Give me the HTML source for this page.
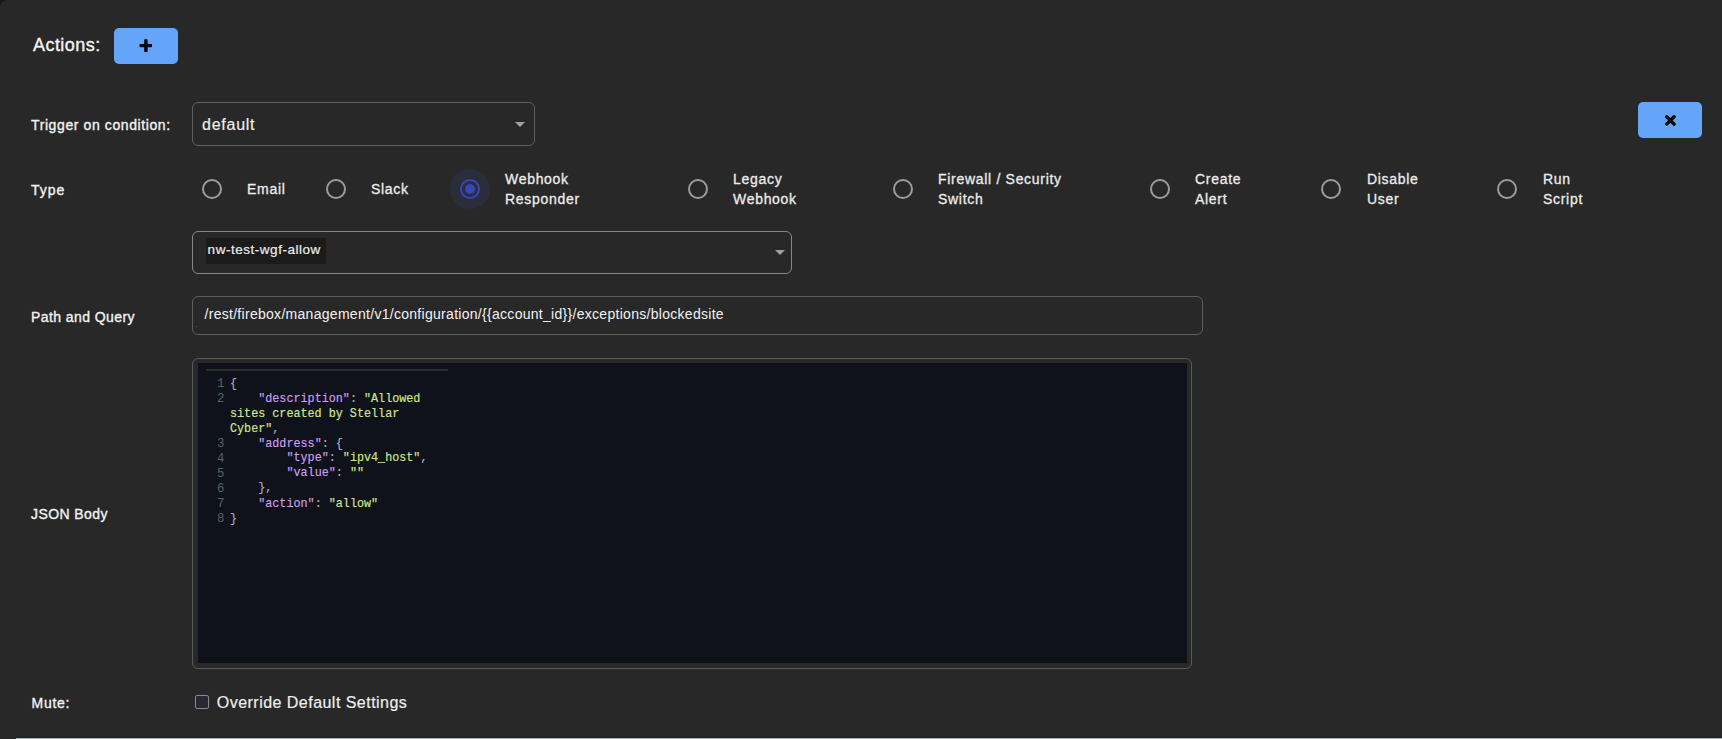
<!DOCTYPE html>
<html><head><meta charset="utf-8">
<style>
*{box-sizing:border-box;margin:0;padding:0}
html,body{width:1722px;height:739px;overflow:hidden;background:#282828;font-family:"Liberation Sans",sans-serif;color:#f0f0f0}
.a{position:absolute;white-space:pre;line-height:1}
.lbl{font-size:14px;color:#f2f2f2;letter-spacing:0.5px;-webkit-text-stroke:0.35px #f2f2f2}
.corner{position:absolute;left:0;top:0;width:12px;height:12px;background:#181818}
.corner::after{content:"";position:absolute;left:0;top:0;width:24px;height:24px;border-top-left-radius:7px;background:#282828}
.btn{position:absolute;background:#64a5fa;border-radius:5px}
.sel{position:absolute;border:1px solid #5f5f5f;border-radius:6px}
.caret{position:absolute;width:0;height:0;border-left:5px solid transparent;border-right:5px solid transparent;border-top:5px solid #a0a0a0}
.radio{position:absolute;width:20px;height:20px;border:2px solid #9c9c9c;border-radius:50%}
.rl{font-size:14px;color:#ececec;line-height:20px;letter-spacing:0.7px;-webkit-text-stroke:0.3px #ececec}
.code{position:absolute;font-family:"Liberation Mono",monospace;font-size:11.75px;line-height:13.889px;white-space:pre;color:#a9b1bd;transform:scaleY(1.08);transform-origin:0 0;-webkit-text-stroke:0.15px}
.k{color:#d09ef0;-webkit-text-stroke-color:#d09ef0}.s{color:#cfe98a;-webkit-text-stroke-color:#cfe98a}.p{color:#a9b1bd;-webkit-text-stroke-color:#a9b1bd}
.ln{position:absolute;font-family:"Liberation Mono",monospace;font-size:11.67px;line-height:15px;color:#59606c;text-align:right;width:14px}
</style></head><body>
<div class="corner"></div>

<!-- Actions -->
<div class="a" style="left:33px;top:36px;font-size:18px;color:#f5f5f5;letter-spacing:0.45px;-webkit-text-stroke:0.35px #f5f5f5">Actions:</div>
<div class="btn" style="left:114px;top:28px;width:64px;height:36px">
  <svg width="64" height="36" style="position:absolute;left:0;top:0"><rect x="25.5" y="16.1" width="12.5" height="3.1" rx="0.6" fill="#050505"/><rect x="30.2" y="11.2" width="3.4" height="12.7" rx="0.6" fill="#050505"/></svg>
</div>

<!-- Trigger -->
<div class="a lbl" style="left:31px;top:118.2px;letter-spacing:0.6px">Trigger on condition:</div>
<div class="sel" style="left:192px;top:102px;width:343px;height:44px"></div>
<div class="a" style="left:202px;top:117px;font-size:16px;color:#ededed;letter-spacing:0.75px;-webkit-text-stroke:0.2px #ededed">default</div>
<div class="caret" style="left:515px;top:122px"></div>

<!-- close button -->
<div class="btn" style="left:1638px;top:102px;width:64px;height:36px">
  <svg width="64" height="36" style="position:absolute;left:0;top:0"><path d="M28.7 14.7 L36.1 22.1 M36.1 14.7 L28.7 22.1" stroke="#050505" stroke-width="3.4" stroke-linecap="round"/></svg>
</div>

<!-- Type -->
<div class="a lbl" style="left:31px;top:183px;letter-spacing:1px">Type</div>
<div class="radio" style="left:202px;top:179px"></div>
<div class="a rl" style="left:247px;top:179px">Email</div>
<div class="radio" style="left:326px;top:179px"></div>
<div class="a rl" style="left:371px;top:179px">Slack</div>
<div style="position:absolute;left:450px;top:169px;width:40px;height:40px;border-radius:50%;background:#2b2d3b"></div>
<div class="radio" style="left:460px;top:179px;border-color:#3647b8"></div>
<div style="position:absolute;left:465px;top:184px;width:10px;height:10px;border-radius:50%;background:#3647b8"></div>
<div class="a rl" style="left:505px;top:169px">Webhook<br>Responder</div>
<div class="radio" style="left:688px;top:179px"></div>
<div class="a rl" style="left:733px;top:169px">Legacy<br>Webhook</div>
<div class="radio" style="left:893px;top:179px"></div>
<div class="a rl" style="left:938px;top:169px">Firewall / Security<br>Switch</div>
<div class="radio" style="left:1150px;top:179px"></div>
<div class="a rl" style="left:1195px;top:169px">Create<br>Alert</div>
<div class="radio" style="left:1321px;top:179px"></div>
<div class="a rl" style="left:1367px;top:169px">Disable<br>User</div>
<div class="radio" style="left:1497px;top:179px"></div>
<div class="a rl" style="left:1543px;top:169px">Run<br>Script</div>

<!-- select 2 -->
<div class="sel" style="left:192px;top:231px;width:600px;height:43px;border-color:#878787"></div>
<div style="position:absolute;left:206px;top:238px;width:120px;height:26px;background:#1b1b1b"></div>
<div class="a" style="left:207.6px;top:242.5px;font-size:13.5px;color:#ececec;letter-spacing:0.53px;-webkit-text-stroke:0.2px #ececec">nw-test-wgf-allow</div>
<div class="caret" style="left:775px;top:250px"></div>

<!-- Path -->
<div class="a lbl" style="left:31px;top:309.5px;letter-spacing:0.42px">Path and Query</div>
<div class="sel" style="left:192px;top:296px;width:1011px;height:39px;border-color:#5c5c5c"></div>
<div class="a" style="left:204.5px;top:307px;font-size:14px;color:#f2f2f2;letter-spacing:0.29px">/rest/firebox/management/v1/configuration/{{account_id}}/exceptions/blockedsite</div>

<div style="position:absolute;left:196px;top:326px;width:1px;height:1px;background:#555"></div>
<!-- JSON body -->
<div class="a lbl" style="left:31px;top:506.5px;letter-spacing:0.42px">JSON Body</div>
<div style="position:absolute;left:192px;top:358px;width:1000px;height:311px;border:1px solid #5a5a5a;border-radius:6px"></div>
<div style="position:absolute;left:198px;top:363px;width:989px;height:300px;background:#0f121a"></div>
<div style="position:absolute;left:206px;top:369px;width:242px;height:2px;background:#2d2d2d"></div>
<div class="ln" style="left:208px;top:377px;font-size:12.3px;width:16.5px">1<br>2<br><br><br>3<br>4<br>5<br>6<br>7<br>8</div>
<div class="code" style="left:230px;top:377px"><span class="p">{</span>
    <span class="k">"description"</span><span class="p">: </span><span class="s">"Allowed</span>
<span class="s">sites created by Stellar</span>
<span class="s">Cyber"</span><span class="p">,</span>
    <span class="k">"address"</span><span class="p">: {</span>
        <span class="k">"type"</span><span class="p">: </span><span class="s">"ipv4_host"</span><span class="p">,</span>
        <span class="k">"value"</span><span class="p">: </span><span class="s">""</span>
    <span class="p">},</span>
    <span class="k">"action"</span><span class="p">: </span><span class="s">"allow"</span>
<span class="p">}</span></div>

<!-- Mute -->
<div class="a lbl" style="left:31.6px;top:696px;letter-spacing:0.7px">Mute:</div>
<div style="position:absolute;left:195px;top:695px;width:14px;height:14px;border:1px solid #8b8998;border-radius:2px;background:#2a2836"></div>
<div class="a" style="left:216.8px;top:695px;font-size:16px;color:#eeeeee;letter-spacing:0.47px;-webkit-text-stroke:0.2px #eeeeee">Override Default Settings</div>

<!-- bottom strip -->
<div style="position:absolute;left:16px;top:737px;width:1706px;height:1px;background:#202020"></div>
<div style="position:absolute;left:16px;top:738px;width:1706px;height:1px;background:#a5bac8"></div>
</body></html>
